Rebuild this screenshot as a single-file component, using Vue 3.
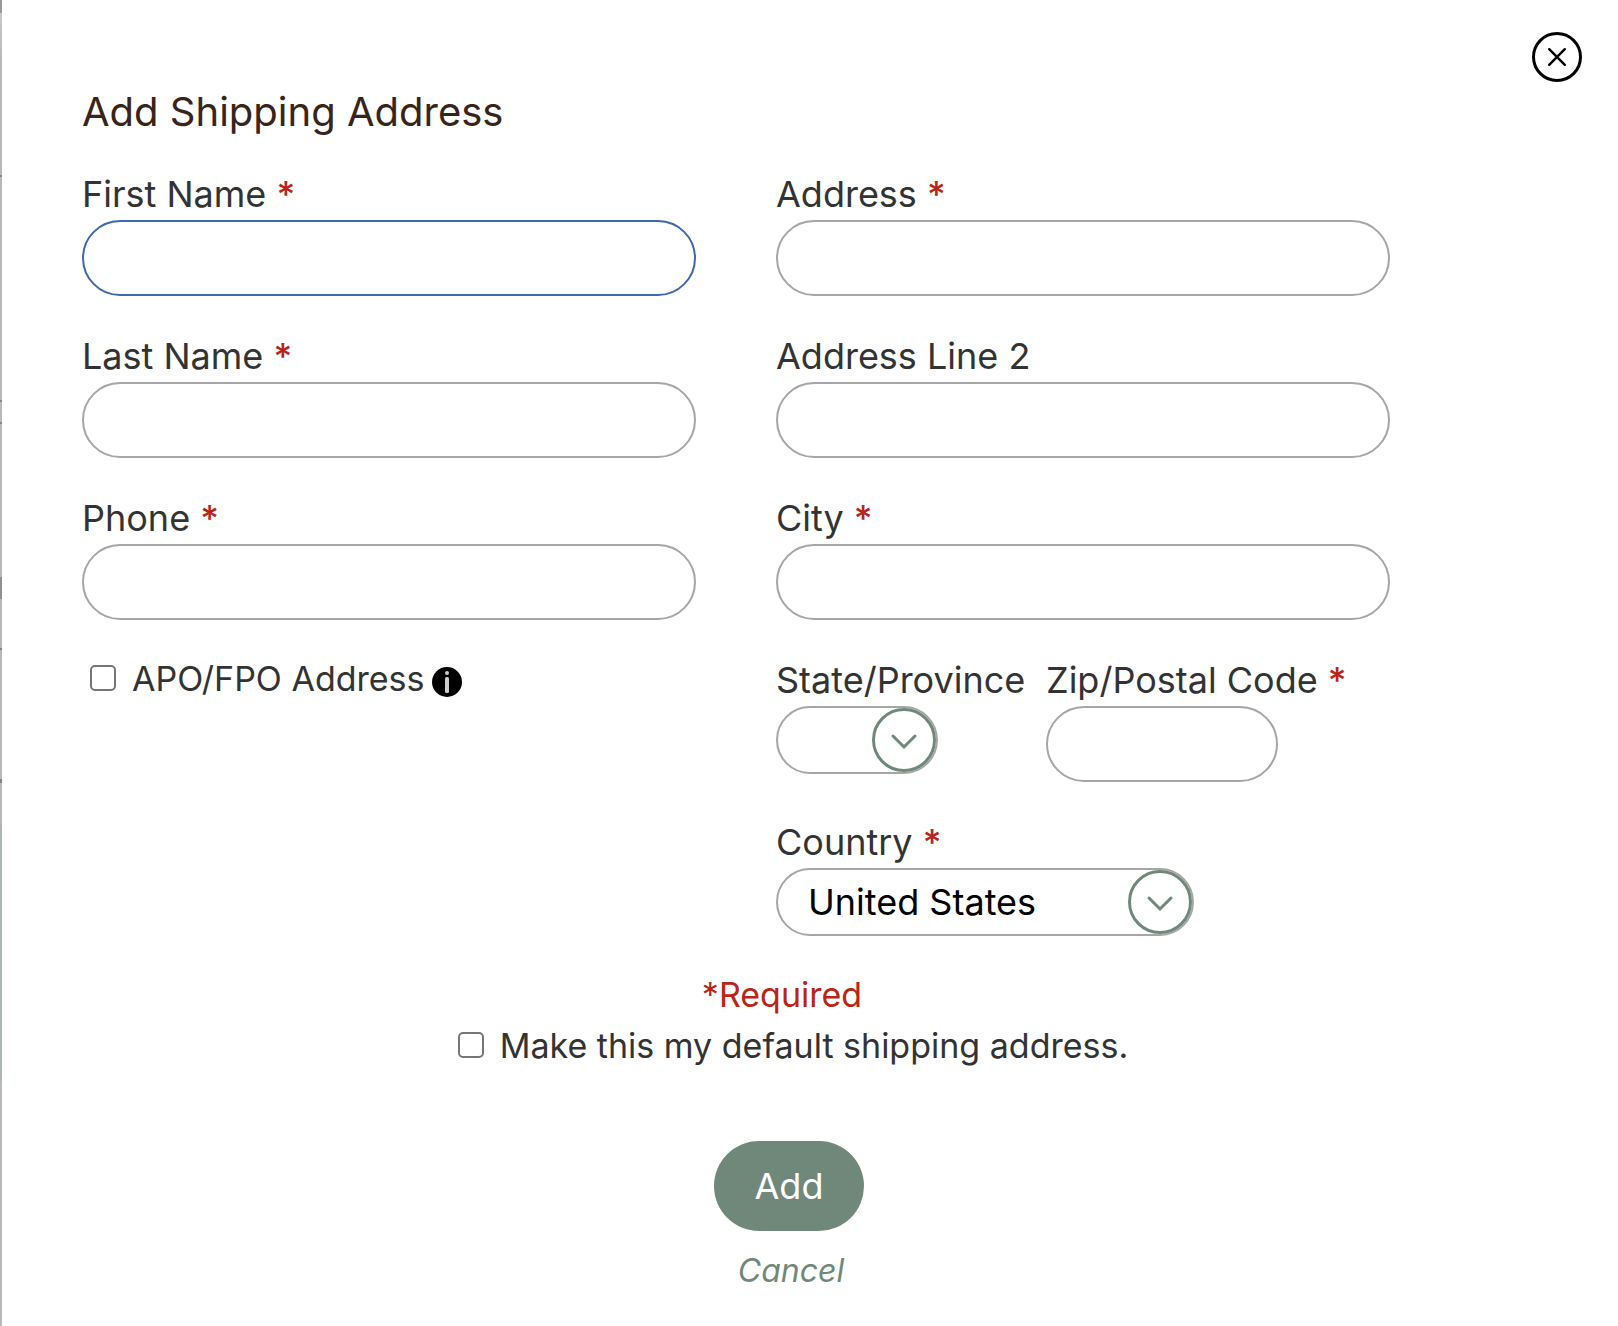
<script setup>
import { reactive } from 'vue'

const form = reactive({
  first: '', last: '', phone: '', address: '', address2: '', city: '',
  apo: false, state: '', zip: '', country: 'United States', isDefault: false,
})

const personFields = [
  { key: 'first', label: 'First Name', required: true, active: true },
  { key: 'last', label: 'Last Name', required: true },
  { key: 'phone', label: 'Phone', required: true },
]

const addressFields = [
  { key: 'address', label: 'Address', required: true },
  { key: 'address2', label: 'Address Line 2', required: false },
  { key: 'city', label: 'City', required: true },
]
</script>

<template>
  <div class="page">
    <div class="backdrop" aria-hidden="true"></div>
    <main class="dialog" role="dialog" aria-labelledby="dialog-title">
      <button class="close" type="button" aria-label="Close">
        <svg viewBox="0 0 50 50" fill="none" stroke="#000" stroke-linecap="round">
          <circle cx="25" cy="25" r="23.5" stroke-width="3" />
          <path d="M17.2 17.2 32.8 32.8M32.8 17.2 17.2 32.8" stroke-width="2.4" />
        </svg>
      </button>

      <form class="form" @submit.prevent>
        <h1 id="dialog-title">Add Shipping Address</h1>

        <div class="columns">
          <div class="column">
            <div v-for="f in personFields" :key="f.key" class="field">
              <label :for="f.key">{{ f.label }} <span v-if="f.required" class="star">*</span></label>
              <input :id="f.key" v-model="form[f.key]" class="text" :class="{ active: f.active }" type="text" />
            </div>
            <div class="check">
              <input id="apo" v-model="form.apo" type="checkbox" />
              <label for="apo">APO/FPO Address</label>
              <svg class="info" viewBox="0 0 30 30" aria-hidden="true">
                <circle cx="15" cy="15" r="15" fill="#000" />
                <circle cx="15" cy="6" r="2" fill="#ccc" />
                <rect x="13" y="10" width="4" height="16" rx="1.5" fill="#ccc" />
              </svg>
            </div>
          </div>

          <div class="column">
            <div v-for="f in addressFields" :key="f.key" class="field">
              <label :for="f.key">{{ f.label }} <span v-if="f.required" class="star">*</span></label>
              <input :id="f.key" v-model="form[f.key]" class="text" type="text" />
            </div>
            <div class="region">
              <div class="field">
                <label for="state">State/Province</label>
                <div class="select state">
                  <select id="state" v-model="form.state"><option value=""></option></select>
                  <svg viewBox="0 0 64 64" aria-hidden="true">
                    <circle cx="32" cy="32" r="30.5" /><path d="M21 28 32 39 43 28" />
                  </svg>
                </div>
              </div>
              <div class="field">
                <label for="zip">Zip/Postal Code <span class="star">*</span></label>
                <input id="zip" v-model="form.zip" class="text zip" type="text" />
              </div>
            </div>
            <div class="field">
              <label for="country">Country <span class="star">*</span></label>
              <div class="select country">
                <select id="country" v-model="form.country"><option>United States</option></select>
                <svg viewBox="0 0 64 64" aria-hidden="true">
                  <circle cx="32" cy="32" r="30.5" /><path d="M21 28 32 39 43 28" />
                </svg>
              </div>
            </div>
          </div>
        </div>

        <div class="footer">
          <p class="required">*Required</p>
          <div class="check">
            <input id="default" v-model="form.isDefault" type="checkbox" />
            <label for="default">Make this my default shipping address.</label>
          </div>
          <button class="add" type="submit">Add</button>
          <a class="cancel" href="#">Cancel</a>
        </div>
      </form>
    </main>
  </div>
</template>

<style>
body {
  margin: 0;
  background: #fff;
}
</style>

<style scoped>
.page {
  display: flex;
  min-height: 100vh;
  font-family: Inter, "Liberation Sans", sans-serif;
  font-size: 36px;
  line-height: 44px;
  color: #333;
}
.page * {
  box-sizing: border-box;
}
.backdrop {
  flex: none;
  width: 2px;
  background: linear-gradient(
    #999 0 13px, #c8c8c8 13px, #b9b9bb 60px 175px, #888 175px 177px,
    #b9b9bb 177px 400px, #888 400px 402px, #b9b9bb 402px 422px,
    #888 422px 424px, #b9b9bb 424px 577px, #909090 577px 599px,
    #b9b9bb 599px 648px, #858585 648px 650px, #b9b9bb 650px 779px,
    #858585 779px 783px, #b9b9bb 783px 824px, #acb7ad 824px 1081px,
    #b9b9bb 1081px
  );
}
.dialog {
  position: relative;
  flex: 1;
  padding: 88px 122px 32px 80px;
  background: #fff;
}
.close {
  position: absolute;
  top: 32px;
  right: 36px;
  width: 50px;
  height: 50px;
  padding: 0;
  border: 0;
  background: none;
}
.close svg {
  display: block;
}
h1 {
  margin: 0 0 36px;
  font-size: 40px;
  line-height: 48px;
  font-weight: 400;
  color: #382418;
}
.columns {
  display: grid;
  grid-template-columns: 1fr 1fr;
  gap: 80px;
  margin-right: 106px;
}
.column {
  display: flex;
  flex-direction: column;
  gap: 38px;
}
.field {
  display: flex;
  flex-direction: column;
  align-items: flex-start;
  gap: 4px;
}
.field label {
  white-space: nowrap;
}
.star,
.required {
  color: #bb2417;
}
.star {
  font-weight: 500;
  font-variant-ligatures: no-contextual;
}
.text {
  width: 100%;
  height: 76px;
  padding: 0 32px;
  border: 2px solid #a6a6a6;
  border-radius: 38px;
  background: #fff;
  font: inherit;
  color: #000;
  outline: none;
}
.text.active,
.text:focus {
  border-color: #4068b0;
}
.text.zip {
  width: 232px;
}
.region {
  display: grid;
  grid-template-columns: 250px 1fr;
  gap: 20px;
}
.select {
  position: relative;
  height: 68px;
}
.select.state {
  width: 162px;
}
.select.country {
  width: 418px;
  max-width: 100%;
}
.select select {
  appearance: none;
  width: 100%;
  height: 100%;
  padding: 0 66px 0 30px;
  border: 2px solid #a6a6a6;
  border-radius: 34px;
  background: #fff;
  font: inherit;
  color: #000;
}
.select svg {
  position: absolute;
  top: 2px;
  right: 2px;
  width: 64px;
  height: 64px;
  fill: none;
  stroke: #6f8879;
  stroke-width: 3;
  stroke-linecap: round;
  pointer-events: none;
}
.check {
  display: flex;
  align-items: center;
  padding-left: 8px;
  font-size: 34px;
  line-height: 42px;
}
.check input {
  appearance: none;
  flex: none;
  width: 26px;
  height: 26px;
  margin: 0 16px 2px 0;
  border: 2px solid #767676;
  border-radius: 5px;
  background: #fff;
}
.check input:checked {
  background: #6f8879;
}
.info {
  width: 30px;
  height: 30px;
  margin: 6px 0 0 8px;
}
.footer {
  display: flex;
  flex-direction: column;
  align-items: center;
  margin-top: 38px;
  font-size: 34px;
  line-height: 42px;
}
.required {
  margin: 0 0 9px;
  padding-right: 14px;
}
.add {
  width: 150px;
  height: 90px;
  margin: 74px 0 19px;
  border: 0;
  border-radius: 45px;
  background: #6f8879;
  font: inherit;
  font-size: 36px;
  color: #fff;
}
.cancel {
  padding-left: 4px;
  font-size: 32px;
  font-style: italic;
  color: #6f8879;
  text-decoration: none;
}
</style>
